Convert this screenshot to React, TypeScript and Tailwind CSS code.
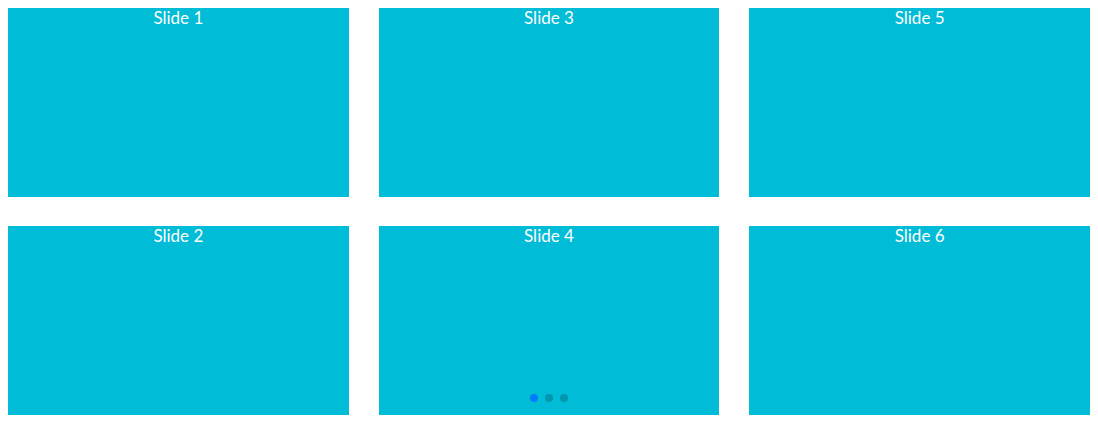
const slides = ["Slide 1", "Slide 2", "Slide 3", "Slide 4", "Slide 5", "Slide 6"]

export default function App() {
  return (
    <div className="bg-white p-2 w-[1098px] h-[426px]" style={{ fontFamily: "Lato, 'Open Sans', sans-serif" }}>
      <div className="relative grid grid-cols-3 grid-rows-2 grid-flow-col gap-x-[30px] gap-y-[29px] w-[1082px]">
        {slides.map((label) => (
          <div key={label} className="h-[189px] bg-[#00bcd6] text-white text-center text-[17px] leading-[20px]">
            {label}
          </div>
        ))}
        <div className="absolute left-0 right-0 bottom-[13px] flex justify-center gap-[7px]">
          <span className="w-2 h-2 rounded-full bg-[#007aff]" />
          <span className="w-2 h-2 rounded-full bg-black/20" />
          <span className="w-2 h-2 rounded-full bg-black/20" />
        </div>
      </div>
    </div>
  )
}
